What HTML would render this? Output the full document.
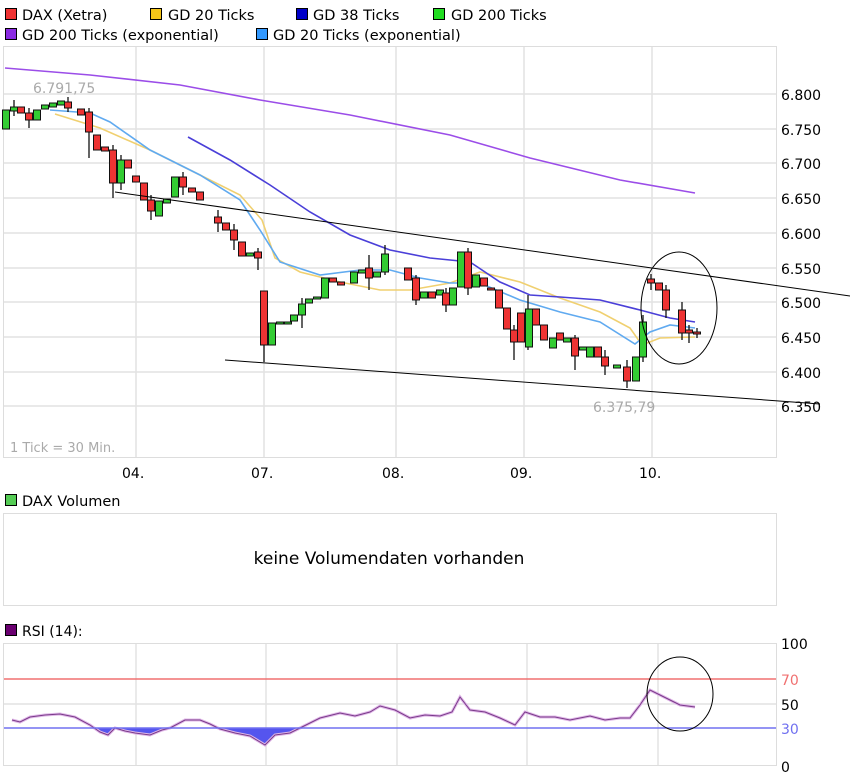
<!DOCTYPE html>
<html><head><meta charset="utf-8"><style>
html,body{margin:0;padding:0;background:#fff;}
svg{display:block;font-family:"DejaVu Sans","Liberation Sans",sans-serif;}
</style></head><body>
<svg width="850" height="782" viewBox="0 0 850 782" xmlns="http://www.w3.org/2000/svg">
<g font-size="14.5" fill="#000">
<rect x="5.5" y="8.5" width="11" height="11" fill="#e33" stroke="#000"/><text x="22" y="20">DAX (Xetra)</text>
<rect x="150.5" y="8.5" width="11" height="11" fill="#f5c518" stroke="#000"/><text x="168" y="20">GD 20 Ticks</text>
<rect x="296.5" y="8.5" width="11" height="11" fill="#0000c8" stroke="#000"/><text x="313" y="20">GD 38 Ticks</text>
<rect x="433.5" y="8.5" width="11" height="11" fill="#22dd22" stroke="#000"/><text x="451" y="20">GD 200 Ticks</text>
<rect x="5.5" y="28.5" width="11" height="11" fill="#8a2be2" stroke="#000"/><text x="22" y="40">GD 200 Ticks (exponential)</text>
<rect x="256.5" y="28.5" width="11" height="11" fill="#3399ff" stroke="#000"/><text x="273" y="40">GD 20 Ticks (exponential)</text>
</g>
<rect x="3.5" y="46.5" width="773" height="411" fill="#fff" stroke="#ddd"/>
<g stroke="#e2e2e2" stroke-width="1.5">
<line x1="4" y1="94" x2="776" y2="94"/><line x1="4" y1="129" x2="776" y2="129"/><line x1="4" y1="163" x2="776" y2="163"/><line x1="4" y1="198" x2="776" y2="198"/><line x1="4" y1="233" x2="776" y2="233"/><line x1="4" y1="268" x2="776" y2="268"/><line x1="4" y1="302" x2="776" y2="302"/><line x1="4" y1="337" x2="776" y2="337"/><line x1="4" y1="372" x2="776" y2="372"/><line x1="4" y1="406" x2="776" y2="406"/>
<line x1="136" y1="47" x2="136" y2="457"/><line x1="264" y1="47" x2="264" y2="457"/><line x1="396" y1="47" x2="396" y2="457"/><line x1="524" y1="47" x2="524" y2="457"/><line x1="652" y1="47" x2="652" y2="457"/>
</g>
<g font-size="14" fill="#000">
<text x="781" y="100">6.800</text><text x="781" y="135">6.750</text><text x="781" y="169">6.700</text><text x="781" y="204">6.650</text><text x="781" y="239">6.600</text><text x="781" y="274">6.550</text><text x="781" y="308">6.500</text><text x="781" y="343">6.450</text><text x="781" y="378">6.400</text><text x="781" y="412">6.350</text>
<text x="122" y="478">04.</text><text x="251" y="478">07.</text><text x="382" y="478">08.</text><text x="510" y="478">09.</text><text x="639" y="478">10.</text>
</g>
<g font-size="14" fill="#aaa">
<text x="33" y="93">6.791,75</text><text x="593" y="412">6.375,79</text>
<text x="10" y="452" font-size="13">1 Tick = 30 Min.</text>
</g>
<g fill="none" stroke-width="1.6">
<polyline stroke="#9b4de8" points="5,68 90,75 180,85 260,100 350,115 450,135 530,158 620,180 695,193"/>
<polyline stroke="#f0d070" points="55,114 100,128 150,150 190,170 240,195 262,220 275,258 300,272 340,282 380,290 410,290 450,283 480,272 520,282 560,298 600,312 630,328 642,345 660,338 695,337"/>
<polyline stroke="#60aaf0" points="50,110 90,113 110,122 150,150 200,175 240,200 260,230 280,262 320,275 360,270 390,270 420,278 450,283 480,283 520,300 560,312 600,322 635,344 650,332 670,325 695,328"/>
<polyline stroke="#4a3fd8" points="188,137 230,160 270,185 310,212 350,235 390,250 430,258 470,262 500,282 530,295 560,297 600,300 640,310 670,318 695,322"/>
</g>
<g stroke="#111" stroke-width="1.3">
<line x1="14" y1="100" x2="14" y2="116"/><line x1="29" y1="108" x2="29" y2="128"/><line x1="68" y1="97" x2="68" y2="112"/><line x1="89" y1="108" x2="89" y2="158"/><line x1="113" y1="145" x2="113" y2="198"/><line x1="121" y1="155" x2="121" y2="190"/><line x1="151" y1="195" x2="151" y2="220"/><line x1="183" y1="172" x2="183" y2="195"/><line x1="218" y1="210" x2="218" y2="232"/><line x1="234" y1="224" x2="234" y2="250"/><line x1="258" y1="248" x2="258" y2="270"/><line x1="264" y1="291" x2="264" y2="362"/><line x1="302" y1="298" x2="302" y2="328"/><line x1="369" y1="255" x2="369" y2="290"/><line x1="385" y1="245" x2="385" y2="275"/><line x1="416" y1="275" x2="416" y2="305"/><line x1="446" y1="288" x2="446" y2="312"/><line x1="468" y1="248" x2="468" y2="295"/><line x1="514" y1="325" x2="514" y2="360"/><line x1="528" y1="295" x2="528" y2="350"/><line x1="575" y1="335" x2="575" y2="370"/><line x1="605" y1="350" x2="605" y2="375"/><line x1="627" y1="360" x2="627" y2="388"/><line x1="643" y1="315" x2="643" y2="362"/><line x1="651" y1="274" x2="651" y2="290"/><line x1="666" y1="285" x2="666" y2="318"/><line x1="682" y1="302" x2="682" y2="340"/><line x1="689" y1="325" x2="689" y2="343"/><line x1="697" y1="328" x2="697" y2="338"/>
</g>
<g stroke="#111" stroke-width="1">
<g fill="#3c3">
<rect x="2.5" y="110" width="7" height="19"/><rect x="10.5" y="107" width="7" height="4"/><rect x="33.5" y="110" width="7" height="10"/><rect x="41.5" y="105" width="7" height="4"/><rect x="49.5" y="103" width="7" height="4"/><rect x="57.5" y="101" width="7" height="4"/><rect x="117.5" y="160" width="7" height="23"/><rect x="155.5" y="201" width="7" height="15"/><rect x="163.5" y="199" width="7" height="4"/><rect x="171.5" y="177" width="7" height="20"/><rect x="246.5" y="253" width="7" height="3"/><rect x="268.5" y="323" width="7" height="22"/><rect x="276.5" y="322" width="7" height="2"/><rect x="284.5" y="322" width="7" height="2"/><rect x="290.5" y="315" width="7" height="6"/><rect x="298.5" y="304" width="7" height="11"/><rect x="305.5" y="299" width="7" height="4"/><rect x="313.5" y="297" width="7" height="2"/><rect x="321.5" y="278" width="7" height="20"/><rect x="350.5" y="272" width="7" height="11"/><rect x="358.5" y="270" width="7" height="3"/><rect x="373.5" y="272" width="7" height="5"/><rect x="381.5" y="254" width="7" height="18"/><rect x="420.5" y="292" width="7" height="6"/><rect x="436.5" y="290" width="7" height="5"/><rect x="449.5" y="288" width="7" height="17"/><rect x="457.5" y="252" width="7" height="35"/><rect x="472.5" y="275" width="7" height="12"/><rect x="525.5" y="309" width="7" height="38"/><rect x="549.5" y="338" width="7" height="10"/><rect x="563.5" y="338" width="7" height="4"/><rect x="579.5" y="347" width="7" height="3"/><rect x="586.5" y="347" width="7" height="10"/><rect x="613.5" y="365" width="7" height="3"/><rect x="632.5" y="357" width="7" height="24"/><rect x="639.5" y="322" width="7" height="35"/>
</g>
<g fill="#e33">
<rect x="17.5" y="107" width="7" height="6"/><rect x="25.5" y="113" width="7" height="7"/><rect x="64.5" y="102" width="7" height="6"/><rect x="77.5" y="109" width="7" height="6"/><rect x="85.5" y="112" width="7" height="20"/><rect x="93.5" y="135" width="7" height="15"/><rect x="101.5" y="147" width="7" height="4"/><rect x="109.5" y="150" width="7" height="33"/><rect x="124.5" y="160" width="7" height="8"/><rect x="132.5" y="176" width="7" height="6"/><rect x="140.5" y="183" width="7" height="17"/><rect x="147.5" y="200" width="7" height="11"/><rect x="179.5" y="177" width="7" height="10"/><rect x="188.5" y="188" width="7" height="4"/><rect x="196.5" y="192" width="7" height="8"/><rect x="214.5" y="217" width="7" height="6"/><rect x="222.5" y="223" width="7" height="7"/><rect x="230.5" y="230" width="7" height="10"/><rect x="238.5" y="242" width="7" height="14"/><rect x="254.5" y="252" width="7" height="6"/><rect x="260.5" y="291" width="7" height="54"/><rect x="329.5" y="278" width="7" height="4"/><rect x="337.5" y="282" width="7" height="3"/><rect x="365.5" y="268" width="7" height="10"/><rect x="404.5" y="268" width="7" height="12"/><rect x="412.5" y="278" width="7" height="22"/><rect x="428.5" y="292" width="7" height="6"/><rect x="442.5" y="293" width="7" height="12"/><rect x="464.5" y="252" width="7" height="36"/><rect x="480.5" y="278" width="7" height="8"/><rect x="487.5" y="288" width="7" height="2"/><rect x="495.5" y="290" width="7" height="18"/><rect x="503.5" y="308" width="7" height="21"/><rect x="510.5" y="330" width="7" height="12"/><rect x="517.5" y="313" width="7" height="29"/><rect x="532.5" y="309" width="7" height="16"/><rect x="540.5" y="325" width="7" height="15"/><rect x="556.5" y="333" width="7" height="7"/><rect x="571.5" y="338" width="7" height="18"/><rect x="594.5" y="347" width="7" height="10"/><rect x="601.5" y="357" width="7" height="9"/><rect x="623.5" y="367" width="7" height="14"/><rect x="647.5" y="279" width="7" height="4"/><rect x="655.5" y="283" width="7" height="7"/><rect x="662.5" y="290" width="7" height="20"/><rect x="678.5" y="310" width="7" height="23"/><rect x="685.5" y="330" width="7" height="3"/><rect x="693.5" y="332" width="7" height="2"/>
</g>
</g>
<g fill="none" stroke="#000" stroke-width="1">
<line x1="115" y1="192" x2="850" y2="296"/>
<line x1="225" y1="360" x2="820" y2="404"/>
<ellipse cx="679" cy="308" rx="38" ry="56"/>
</g>
<rect x="5.5" y="494.5" width="11" height="11" fill="#5c5" stroke="#000"/>
<text x="22" y="506" font-size="14.5">DAX Volumen</text>
<rect x="3.5" y="513.5" width="773" height="92" fill="#fff" stroke="#ddd"/>
<text x="389" y="564" font-size="17" text-anchor="middle">keine Volumendaten vorhanden</text>
<rect x="5.5" y="624.5" width="11" height="11" fill="#6a0070" stroke="#000"/>
<text x="22" y="636" font-size="14">RSI (14):</text>
<rect x="3.5" y="643.5" width="773" height="122" fill="#fff" stroke="#ddd"/>
<g stroke="#e2e2e2" stroke-width="1.5">
<line x1="4" y1="704" x2="776" y2="704"/>
<line x1="136" y1="644" x2="136" y2="765"/><line x1="266" y1="644" x2="266" y2="765"/><line x1="397" y1="644" x2="397" y2="765"/><line x1="527" y1="644" x2="527" y2="765"/><line x1="658" y1="644" x2="658" y2="765"/>
</g>
<line x1="4" y1="679" x2="776" y2="679" stroke="#f07070" stroke-width="1.5"/>
<defs><clipPath id="below"><rect x="0" y="728" width="850" height="40"/></clipPath></defs>
<polygon clip-path="url(#below)" fill="#5555ee" points="12,728 12,720 20,722 30,717 45,715 60,714 75,717 90,725 100,732 108,735 115,728 125,731 135,733 150,735 162,730 170,728 185,720 200,720 210,724 220,729 235,733 250,736 265,745 275,735 290,733 300,728 320,718 695,728"/>
<polyline fill="none" stroke="#e0b8e8" stroke-width="3" points="12,720 20,722 30,717 45,715 60,714 75,717 90,725 100,732 108,735 115,728 125,731 135,733 150,735 162,730 170,728 185,720 200,720 210,724 220,729 235,733 250,736 265,745 275,735 290,733 300,728 320,718 340,713 355,716 370,712 380,706 395,710 410,718 425,715 440,716 452,712 460,697 470,710 485,712 500,718 515,725 525,712 540,717 555,717 570,720 590,716 605,720 620,718 630,718 640,705 650,690 660,695 670,700 680,705 695,707"/>
<polyline fill="none" stroke="#7a3a8a" stroke-width="1" points="12,720 20,722 30,717 45,715 60,714 75,717 90,725 100,732 108,735 115,728 125,731 135,733 150,735 162,730 170,728 185,720 200,720 210,724 220,729 235,733 250,736 265,745 275,735 290,733 300,728 320,718 340,713 355,716 370,712 380,706 395,710 410,718 425,715 440,716 452,712 460,697 470,710 485,712 500,718 515,725 525,712 540,717 555,717 570,720 590,716 605,720 620,718 630,718 640,705 650,690 660,695 670,700 680,705 695,707"/>
<line x1="4" y1="728" x2="776" y2="728" stroke="#7070f0" stroke-width="1.5"/>
<ellipse cx="680" cy="694" rx="33" ry="37" fill="none" stroke="#000"/>
<g font-size="14">
<text x="781" y="649">100</text><text x="781" y="685" fill="#f07070">70</text><text x="781" y="710">50</text><text x="781" y="734" fill="#7070f0">30</text><text x="781" y="772">0</text>
</g>
</svg>
</body></html>
